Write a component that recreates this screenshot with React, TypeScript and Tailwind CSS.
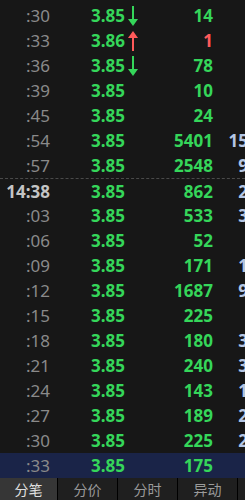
import React from "react";

type Row = {
  t: string;
  big?: boolean;
  p: string;
  dir?: "up" | "down";
  v: string;
  vRed?: boolean;
  n?: string;
};

const rows: Row[] = [
  { t: ":30", p: "3.85", dir: "down", v: "14" },
  { t: ":33", p: "3.86", dir: "up", v: "1", vRed: true },
  { t: ":36", p: "3.85", dir: "down", v: "78" },
  { t: ":39", p: "3.85", v: "10" },
  { t: ":45", p: "3.85", v: "24" },
  { t: ":54", p: "3.85", v: "5401", n: "15" },
  { t: ":57", p: "3.85", v: "2548", n: "9" },
  { t: "14:38", big: true, p: "3.85", v: "862", n: "2" },
  { t: ":03", p: "3.85", v: "533", n: "3" },
  { t: ":06", p: "3.85", v: "52" },
  { t: ":09", p: "3.85", v: "171", n: "1" },
  { t: ":12", p: "3.85", v: "1687", n: "9" },
  { t: ":15", p: "3.85", v: "225" },
  { t: ":18", p: "3.85", v: "180", n: "3" },
  { t: ":21", p: "3.85", v: "240", n: "3" },
  { t: ":24", p: "3.85", v: "143", n: "1" },
  { t: ":27", p: "3.85", v: "189", n: "2" },
  { t: ":30", p: "3.85", v: "225", n: "2" },
  { t: ":33", p: "3.85", v: "175" },
];

function DownArrow() {
  return (
    <svg width="10" height="20" viewBox="0 0 10 20" className="shrink-0">
      <rect x="4" y="0" width="2" height="14" fill="#35d65a" />
      <polygon points="0,13 10,13 5,20" fill="#35d65a" />
    </svg>
  );
}

function UpArrow() {
  return (
    <svg width="10" height="20" viewBox="0 0 10 20" className="shrink-0">
      <polygon points="0,7 10,7 5,0" fill="#ff5a5a" />
      <rect x="4" y="6" width="2" height="14" fill="#ff5a5a" />
    </svg>
  );
}

export default function App() {
  return (
    <div
      className="w-[245px] h-[500px] bg-[#171717] overflow-hidden flex flex-col"
      style={{ fontFamily: '"Noto Sans", "Noto Sans CJK SC", sans-serif' }}
    >
      <div className="flex-1 pt-[3px] overflow-hidden">
        {rows.map((r, i) => {
          const highlight = i === rows.length - 1;
          const dashed = i === 7;
          return (
            <div
              key={i}
              className={`h-[25px] flex items-center overflow-hidden text-[17px] leading-none ${
                highlight ? "bg-[#1a2448]" : ""
              } ${dashed ? "border-t border-dashed border-[#4a4a4a]" : ""}`}
            >
              <div
                className={`w-[50px] shrink-0 text-right ${
                  r.big ? "font-bold text-[#c4c4c4]" : "text-[#8a8a8a]"
                }`}
              >
                {r.t}
              </div>
              <div className="ml-[41px] w-[50px] shrink-0 flex items-center gap-[3px]">
                <span className="font-bold text-[#35d65a]">{r.p}</span>
                {r.dir === "down" && <DownArrow />}
                {r.dir === "up" && <UpArrow />}
              </div>
              <div
                className={`w-[72px] shrink-0 text-right font-bold ${
                  r.vRed ? "text-[#ff5a5a]" : "text-[#35d65a]"
                }`}
              >
                {r.v}
              </div>
              <div className="w-[35px] shrink-0 text-right font-bold text-[#b4c6e4]">
                {r.n ?? ""}
              </div>
            </div>
          );
        })}
      </div>
      <div
        className="h-[22px] shrink-0 flex bg-[#1f1f1f] text-[14px] leading-none"
        style={{ fontFamily: '"Noto Sans CJK SC", sans-serif' }}
      >
        <div className="w-[58px] shrink-0 border-r border-black bg-[#363636] text-[#e0e0e0] flex items-center justify-center">
          分笔
        </div>
        <div className="w-[60px] shrink-0 border-r border-black text-[#9a9a9a] flex items-center justify-center">
          分价
        </div>
        <div className="w-[60px] shrink-0 border-r border-black text-[#9a9a9a] flex items-center justify-center">
          分时
        </div>
        <div className="w-[60px] shrink-0 border-r border-black text-[#9a9a9a] flex items-center justify-center">
          异动
        </div>
        <div className="flex-1" />
      </div>
    </div>
  );
}
